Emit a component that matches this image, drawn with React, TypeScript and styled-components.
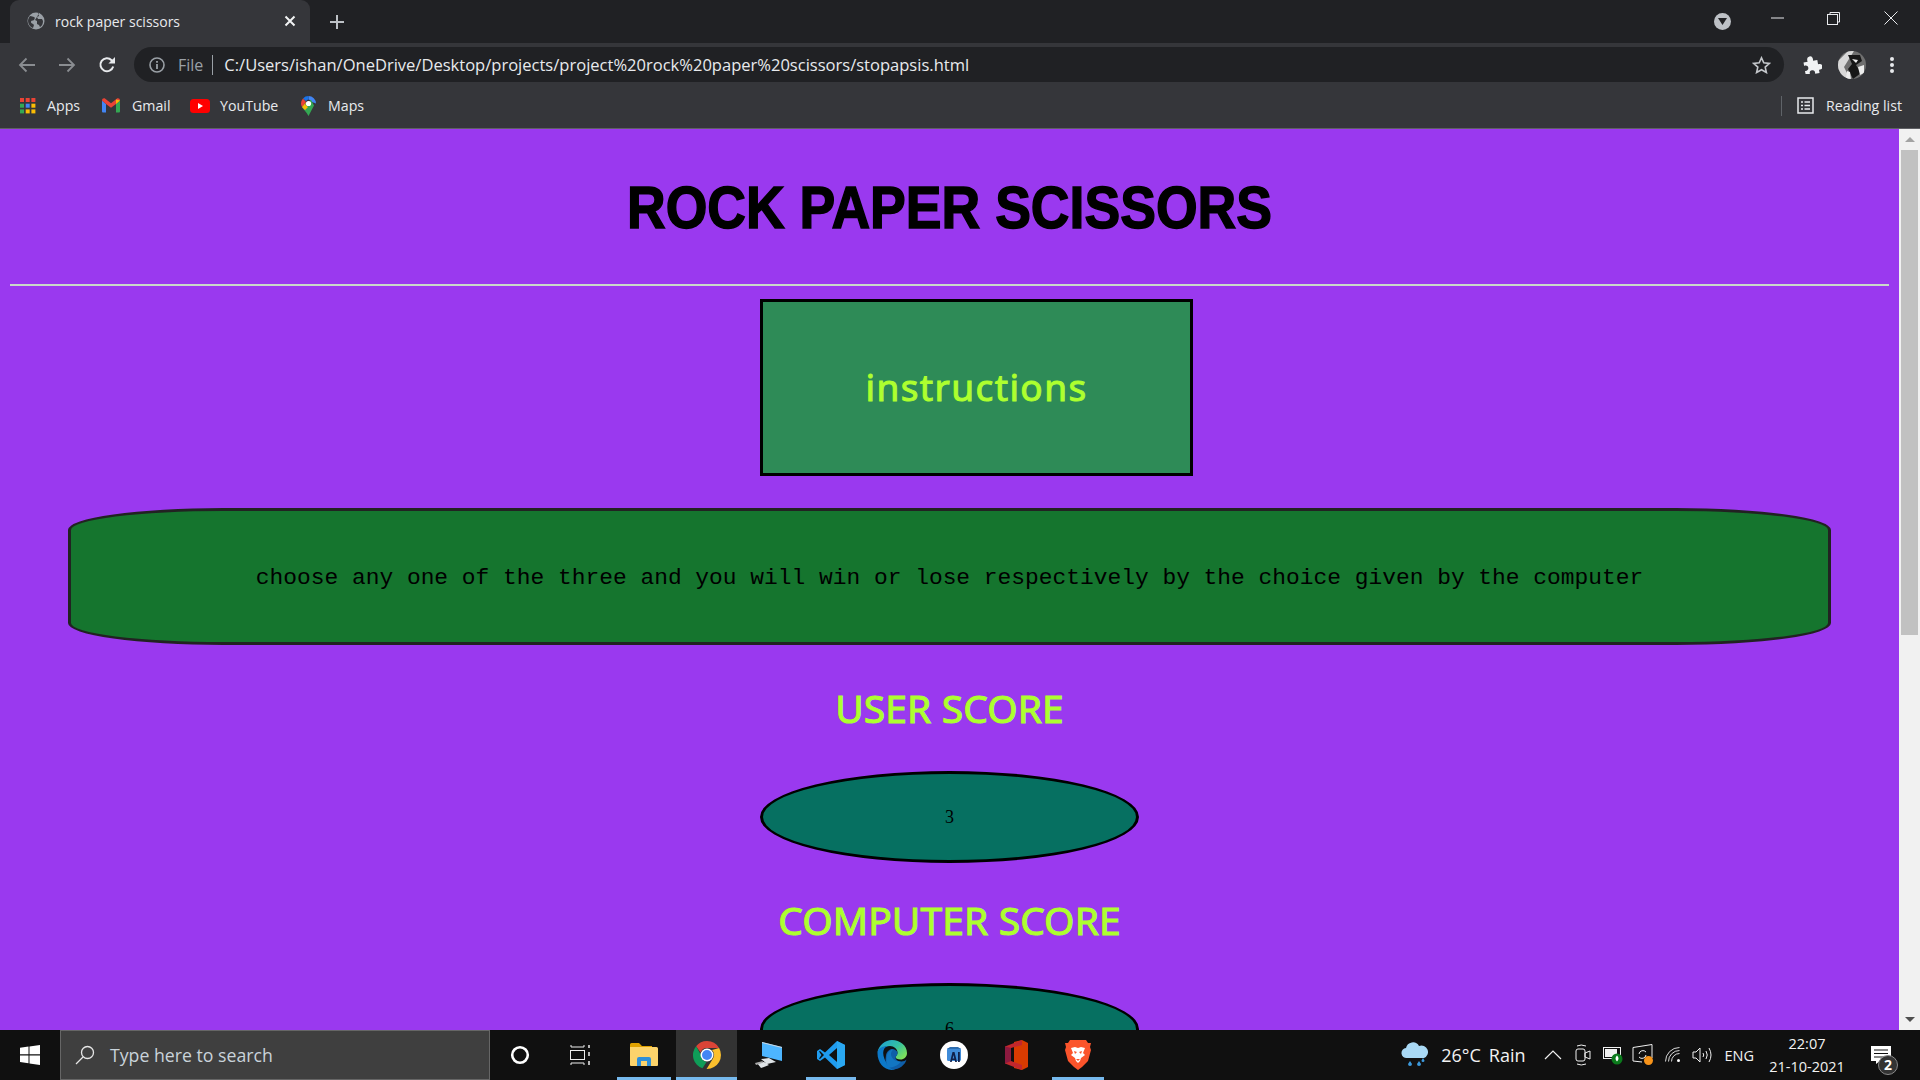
import React from "react";
import styled, { createGlobalStyle } from "styled-components";

const Global = createGlobalStyle`
  html, body { margin: 0; padding: 0; height: 100%; overflow: hidden; background: #101010; }
  #root { height: 100%; }
  * { box-sizing: border-box; }
`;

const uiFont = `"Open Sans", "Noto Sans", sans-serif`;

const Screen = styled.div`
  width: 1920px; height: 1080px; display: flex; flex-direction: column; overflow: hidden;
  font-family: ${uiFont};
`;

/* ---- browser chrome ---- */
const TabStrip = styled.div`
  height: 43px; background: #202124; display: flex; align-items: flex-end; padding-left: 10px; flex: none; color: #fff;
`;
const Tab = styled.div`
  width: 300px; height: 43px; background: #35363a; border-radius: 9px 9px 0 0; display: flex; align-items: center; padding: 0 14px 1px 17px;
`;
const TabTitle = styled.span`
  font-size: 14px; color: #e8eaed; margin-left: 10px; flex: 1; white-space: nowrap;
`;
const NewTab = styled.div`
  width: 54px; height: 43px; display: flex; align-items: center; justify-content: center;
`;
const StripSpacer = styled.div`flex: 1;`;
const WindowBtn = styled.div<{ $w: number }>`
  width: ${(p) => p.$w}px; height: 36px; align-self: flex-start; display: flex; align-items: center; justify-content: center;
`;
const ProfileChevron = styled.div`
  width: 17px; height: 17px; border-radius: 50%; background: #bdc1c6; margin-right: 19px; align-self: center; display: flex; align-items: center; justify-content: center;
`;
const Toolbar = styled.div`
  height: 43px; background: #35363a; display: flex; align-items: center; padding: 0 8px 0 7px; flex: none;
`;
const ToolBtn = styled.div`
  width: 40px; height: 40px; display: flex; align-items: center; justify-content: center; flex: none;
`;
const Omnibox = styled.div`
  flex: 1; height: 35px; margin: 0 8px 0 7px; background: #202124; border-radius: 18px; display: flex; align-items: center; padding: 0 13px 0 15px;
`;
const FileLabel = styled.span`
  font-size: 16px; color: #9aa0a6; margin-left: 13px;
`;
const Divider = styled.span`
  width: 1px; height: 20px; background: #9aa0a6; margin: 0 11px 0 9px;
`;
const UrlText = styled.span`
  font-size: 16.55px; color: #e8eaed; flex: 1; white-space: nowrap;
`;
const Avatar = styled.div`
  width: 28px; height: 28px; border-radius: 50%; overflow: hidden;
`;
const BookmarkBar = styled.div`
  height: 43px; background: #35363a; border-bottom: 1px solid #5f6064; display: flex; align-items: center; padding: 0 18px 3px 20px; flex: none;
`;
const Bookmark = styled.div<{ $w: number }>`
  width: ${(p) => p.$w}px; display: flex; align-items: center; height: 28px; flex: none;
`;
const BookmarkIcon = styled.span<{ $w: number }>`
  width: ${(p) => p.$w}px; display: flex; align-items: center; flex: none;
`;
const BookmarkText = styled.span`
  font-size: 14.2px; color: #e8eaed; white-space: nowrap;
`;
const BarSpacer = styled.div`flex: 1;`;
const ReadingDivider = styled.span`
  width: 1px; height: 20px; background: #5f6368; margin-right: 15px;
`;

/* ---- page ---- */
const Viewport = styled.div`
  flex: 1; min-height: 0; display: flex; background: #9a39ef;
`;
const PageContent = styled.main`
  flex: 1; min-width: 0; overflow: hidden; padding: 0 10px;
`;
const Heading = styled.h1`
  margin: 39px 0 0; height: 116px; text-align: center; color: #000; font: bold 60px/80px "Liberation Sans", Arial, sans-serif;
  transform: scaleX(0.893); -webkit-text-stroke: 1.5px #000;
`;
const Rule = styled.hr`
  margin: 0 0 13px; border: 0; height: 2px; background: #c9d9c9; width: 1879px;
`;
const InstructionsBox = styled.div`
  width: 433px; height: 177px; margin: 0 0 32px 750px; padding-bottom: 3px; background: #2e8b57; border: 3px solid #000; display: flex; align-items: center; justify-content: center;
  color: #adff2f; font: 400 37px "Noto Sans", sans-serif; letter-spacing: 1.4px; -webkit-text-stroke: 1px #adff2f;
`;
const Pill = styled.div`
  width: 1763px; height: 137px; margin-left: 58px; padding-top: 2px; background: #15752e; border: 3px solid #222; border-radius: 155px / 22px; display: flex; align-items: center; justify-content: center;
  font: 22.9px "Liberation Mono", monospace; color: #000; white-space: nowrap;
`;
const ScoreTitle = styled.h2`
  margin: 0; text-align: center; color: #adff2f; font: 400 39px/50px "Noto Sans", sans-serif; letter-spacing: 0.1px; -webkit-text-stroke: 1px #adff2f;
`;
const ScoreOval = styled.div`
  width: 379px; height: 92px; margin: 0 auto; background: #067061; border: 3px solid #000; border-radius: 50%;
  display: flex; align-items: center; justify-content: center; font: 18px "Liberation Serif", serif; color: #000;
`;
const ScoreBlock = styled.section<{ $top: number; $gap: number }>`
  padding-top: ${(p) => p.$top}px;
  ${ScoreTitle} { margin-bottom: ${(p) => p.$gap}px; }
`;
const ScrollBar = styled.div`
  width: 21px; background: #f1f1f1; display: flex; flex-direction: column; align-items: center; flex: none;
`;
const ScrollArrow = styled.div<{ $down?: boolean }>`
  height: 21px; width: 100%; display: flex; align-items: center; justify-content: center; flex: none;
  &::before {
    content: ""; width: 0; height: 0; border-left: 5px solid transparent; border-right: 5px solid transparent;
    ${(p) => (p.$down ? "border-top: 5px solid #505050;" : "border-bottom: 5px solid #a3a3a3;")}
  }
`;
const ScrollThumb = styled.div`
  width: 17px; height: 485px; background: #c1c1c1; flex: none;
`;
const ScrollGap = styled.div`flex: 1;`;

/* ---- taskbar ---- */
const Taskbar = styled.footer`
  height: 50px; background: #101010; display: flex; align-items: stretch; flex: none; color: #fff;
`;
const StartBtn = styled.div`
  width: 60px; display: flex; align-items: center; justify-content: center; flex: none;
`;
const SearchBox = styled.div`
  width: 430px; background: #3f3f3f; border: 1px solid #666; display: flex; align-items: center; padding-left: 14px; flex: none;
`;
const SearchText = styled.span`
  font-size: 17.7px; color: #c9d3da; margin-left: 15px; white-space: nowrap;
`;
const TaskSlot = styled.div<{ $w?: number; $active?: boolean; $running?: boolean; $ml?: number }>`
  position: relative; width: ${(p) => p.$w ?? 62}px; margin-left: ${(p) => p.$ml ?? 0}px; display: flex; align-items: center; justify-content: center; flex: none;
  background: ${(p) => (p.$active ? "#333" : "transparent")};
  ${(p) =>
    p.$running
      ? `&::after { content: ""; position: absolute; bottom: 0; height: 3px; background: #76b9ed; left: ${p.$active ? 0 : 5}px; right: ${p.$active ? 0 : 5}px; }`
      : ""}
`;
const Tray = styled.div`
  margin-left: auto; display: flex; align-items: center; padding-right: 14px;
`;
const TrayIcon = styled.div<{ $w: number; $ml?: number }>`
  width: ${(p) => p.$w}px; margin-left: ${(p) => p.$ml ?? 0}px; display: flex; align-items: center; justify-content: center; flex: none;
`;
const TrayText = styled.span<{ $ml?: number; $size?: number }>`
  font-size: ${(p) => p.$size ?? 18}px; margin-left: ${(p) => p.$ml ?? 0}px; color: #f2f2f2; white-space: nowrap;
`;
const Clock = styled.div`
  width: 86px; margin-left: 10px; text-align: center; font-size: 14.5px; line-height: 23px; color: #f2f2f2; white-space: nowrap;
`;
const Notify = styled.div`
  position: relative; width: 50px; margin-left: 6px; align-self: stretch; display: flex; align-items: center; justify-content: center;
`;
const NotifyBadge = styled.span`
  position: absolute; left: 22px; top: 25px; width: 20px; height: 20px; border-radius: 50%; background: #333; border: 1px solid #888; color: #fff;
  font: bold 14px/18px "Open Sans", sans-serif; text-align: center;
`;

/* ---- drawn icons ---- */
const Globe = () => (
  <svg width="18" height="18" viewBox="0 0 18 18">
    <circle cx="9" cy="9" r="8.5" fill="#9aa0a6" />
    <path d="M3 4c2 0 3 1 4 1s1 2 0 3-3 0-3 2 2 1 3 3l-1 3C3 15 1 12 1 9c0-2 1-4 2-5zM11 1l1 3-2 1 1 2 4 0 1 2c0 3-1 5-3 6l-1-2-2-1 0-3-2-1c2-3 3-5 4-7z" fill="#35363a" />
  </svg>
);
const CloseX = () => (
  <svg width="12" height="12" viewBox="0 0 12 12"><path d="M1.5 1.5l9 9M10.5 1.5l-9 9" stroke="#f1f3f4" strokeWidth="2" /></svg>
);
const Plus = () => (
  <svg width="16" height="16" viewBox="0 0 16 16"><path d="M8 1v14M1 8h14" stroke="#bdc1c6" strokeWidth="2" /></svg>
);
const Arrow = ({ right, color }: { right?: boolean; color: string }) => (
  <svg width="18" height="16" viewBox="0 0 18 16" style={right ? { transform: "scaleX(-1)" } : undefined}>
    <path d="M17 8H2M8.5 1.5L2 8l6.5 6.5" stroke={color} strokeWidth="1.8" fill="none" />
  </svg>
);
const Reload = () => (
  <svg width="18" height="18" viewBox="0 0 18 18">
    <path d="M15.2 10.5A6.5 6.5 0 1 1 13.6 4.2L15.5 6" stroke="#e8eaed" strokeWidth="2" fill="none" />
    <path d="M17 1v6.6h-6.6z" fill="#e8eaed" />
  </svg>
);
const Info = () => (
  <svg width="16" height="16" viewBox="0 0 16 16">
    <circle cx="8" cy="8" r="7" stroke="#9aa0a6" strokeWidth="1.6" fill="none" />
    <path d="M8 7v5M8 4v1.8" stroke="#9aa0a6" strokeWidth="1.8" />
  </svg>
);
const Star = () => (
  <svg width="19" height="18" viewBox="0 0 19 18">
    <path d="M9.5 1.8l2.3 5 5.5.6-4.1 3.7 1.2 5.4-4.9-2.8-4.9 2.8 1.2-5.4L1.7 7.4l5.5-.6z" stroke="#c4c7cb" strokeWidth="1.6" fill="none" />
  </svg>
);
const Puzzle = () => (
  <svg width="19" height="19" viewBox="0 0 19 19">
    <path d="M1 6h4.2C4.6 3.5 5.5 1 8 1s3.300 2.500 2.700 5H15v4.300c2.500-.6 4 .6 4 2.700s-1.500 3.300-4 2.700V19h-4.500c.6-2.500-.5-3.800-2.500-3.800S4.800 16.500 5.400 19H1v-4.500c2.300.6 3.800-.7 3.800-2.500S3.300 8.900 1 9.500z" fill="#f1f3f4" transform="rotate(-10 9.500 9.500)" />
  </svg>
);
const Dots = () => (
  <svg width="6" height="18" viewBox="0 0 6 18">
    <circle cx="3" cy="3" r="2" fill="#e8eaed" /><circle cx="3" cy="9" r="2" fill="#e8eaed" /><circle cx="3" cy="15" r="2" fill="#e8eaed" />
  </svg>
);
const AvatarArt = () => (
  <svg width="28" height="28" viewBox="0 0 28 28">
    <rect width="28" height="28" fill="#6f6f6f" />
    <path d="M0 10L10 0h6L6 16 12 28H2L0 24z" fill="#d8d8d8" />
    <path d="M10 4h12l2 6-6 4 5 8-8 6-5-10 4-5z" fill="#171717" />
    <path d="M14 8l6 1-2 3zM9 20l3 1 1 7H8zM20 16l6-2v8l-4 2z" fill="#ededed" />
  </svg>
);
const AppsGrid = () => {
  const colors = ["#ea4335", "#ea4335", "#ea4335", "#34a853", "#4285f4", "#fbbc04", "#34a853", "#fbbc04", "#fbbc04"];
  return (
    <svg width="16" height="16" viewBox="0 0 16 16">
      {colors.map((c, i) => (
        <rect key={i} x={(i % 3) * 5.7} y={Math.floor(i / 3) * 5.7} width="4" height="4" fill={c} />
      ))}
    </svg>
  );
};
const Gmail = () => (
  <svg width="18" height="15" viewBox="0 0 18 15">
    <path d="M0 2.500V13.500A1 1 0 0 0 1 14.500H4V6z" fill="#4285f4" />
    <path d="M14 6v8.500h3a1 1 0 0 0 1-1V2.500z" fill="#34a853" />
    <path d="M0 2.500C0 .5 2 -.2 3.300 .8L9 5.300 14.700 .8C16 -.2 18 .5 18 2.500L14 6 9 9.800 4 6z" fill="#ea4335" />
    <path d="M14 1.500L18 2.500 14 6z" fill="#fbbc04" />
  </svg>
);
const YouTube = () => (
  <svg width="20" height="14" viewBox="0 0 20 14">
    <rect width="20" height="14" rx="3.500" fill="#f00" /><path d="M8 4l5 3-5 3z" fill="#fff" />
  </svg>
);
const MapsPin = () => (
  <svg width="15" height="20" viewBox="0 0 15 20">
    <path d="M7.500 0A7.500 7.500 0 0 1 15 7.500L11 6A4 4 0 0 0 7.500 3.500z" fill="#4285f4" />
    <path d="M7.500 0A7.500 7.500 0 0 0 2 2.400L5 5.200A3.500 3.500 0 0 1 7.500 3.500z" fill="#1a73e8" />
    <path d="M2 2.400A7.500 7.500 0 0 0 0 7.500c0 1.200.4 2.300 1 3.400L5 6z" fill="#ea4335" />
    <path d="M1 10.900L10 3.800 13 9.500 7.500 20C5.500 16 2.500 13.500 1 10.900z" fill="#34a853" />
    <path d="M1 10.900L5 6.200 4.400 9 7 11 4 14z" fill="#fbbc04" />
    <circle cx="7.500" cy="7.500" r="2.600" fill="#fff" />
  </svg>
);
const ReadingList = () => (
  <svg width="17" height="17" viewBox="0 0 17 17">
    <rect x="1" y="1" width="15" height="15" fill="none" stroke="#e8eaed" strokeWidth="1.500" />
    <path d="M4 5h2M7.500 5h5.500M4 8.500h2M7.500 8.500h5.500M4 12h2M7.500 12h5.500" stroke="#e8eaed" strokeWidth="1.500" />
  </svg>
);
const Minimize = () => (
  <svg width="13" height="2" viewBox="0 0 13 2"><path d="M0 1h13" stroke="#e8eaed" /></svg>
);
const Restore = () => (
  <svg width="13" height="13" viewBox="0 0 13 13">
    <path d="M3 2.500V.5h9.500V10H10.500" stroke="#e8eaed" fill="none" /><rect x=".5" y="2.500" width="10" height="10" stroke="#e8eaed" fill="none" />
  </svg>
);
const WinClose = () => (
  <svg width="14" height="14" viewBox="0 0 14 14"><path d="M.5 .5l13 13M13.500 .5l-13 13" stroke="#e8eaed" /></svg>
);
const WindowsLogo = () => (
  <svg width="20" height="20" viewBox="0 0 20 20">
    <path d="M0 2.800L8.500 1.600V9.300H0zM9.500 1.400L20 0V9.300H9.500zM0 10.400H8.500V18.200L0 17zM9.500 10.400H20V20L9.500 18.500z" fill="#fff" />
  </svg>
);
const SearchGlass = () => (
  <svg width="20" height="20" viewBox="0 0 20 20">
    <circle cx="12.500" cy="7.500" r="6" fill="none" stroke="#e6e6e6" strokeWidth="1.300" /><path d="M8 12L1 19" stroke="#e6e6e6" strokeWidth="1.300" />
  </svg>
);
const Cortana = () => (
  <svg width="20" height="20" viewBox="0 0 20 20"><circle cx="10" cy="10" r="7.800" stroke="#fff" strokeWidth="2.600" fill="none" /></svg>
);
const TaskView = () => (
  <svg width="21" height="20" viewBox="0 0 21 20">
    <path d="M1 0v2h13V0M1 20v-2h13v2" stroke="#eee" fill="none" /><rect x=".5" y="5.500" width="14" height="9" stroke="#eee" fill="none" /><path d="M19 0v3M19 7v4M19 16v4" stroke="#eee" strokeWidth="1.500" />
  </svg>
);
const Folder = () => (
  <svg width="28" height="25" viewBox="0 0 28 25">
    <path d="M0 1.500A1.500 1.500 0 0 1 1.500 0H9l3 3h10v3H0z" fill="#e0a100" />
    <path d="M0 4h26.500A1.500 1.500 0 0 1 28 5.500V22a1 1 0 0 1-1 1H1a1 1 0 0 1-1-1z" fill="#fcd36b" />
    <path d="M7 23v-7a2 2 0 0 1 2-2h10a2 2 0 0 1 2 2v7h-4v-5h-6v5z" fill="#2f8fd8" />
  </svg>
);
const Chrome = () => (
  <svg width="28" height="28" viewBox="0 0 28 28">
    <path d="M14 0a14 14 0 0 1 12.100 7H14a7 7 0 0 0-6.500 4.400L3.100 5.200A14 14 0 0 1 14 0z" fill="#db4437" />
    <path d="M3.100 5.200L8 14a7 7 0 0 0 5.500 6.900L9.500 27.300A14 14 0 0 1 3.100 5.200z" fill="#0f9d58" />
    <path d="M26.100 7A14 14 0 0 1 14 28h-.4L20 17.500A7 7 0 0 0 19 9.100z" fill="#fbc02d" />
    <circle cx="14" cy="14" r="6.500" fill="#fff" /><circle cx="14" cy="14" r="5" fill="#4285f4" />
  </svg>
);
const ThisPc = () => (
  <svg width="28" height="26" viewBox="0 0 28 26">
    <path d="M7 0l20 5v14L7 14z" fill="#4db5ff" /><path d="M7 0l20 5v1L7 1z" fill="#cfd6dc" />
    <path d="M6 17l8-1 7 4-9 2zM2 21l7-1 5 3-8 3z" fill="#dfe3e6" /><path d="M0 21l8-2-1 2-6 2z" fill="#aaa" />
  </svg>
);
const VsCode = () => (
  <svg width="30" height="30" viewBox="0 0 30 30">
    <path d="M21 1l8 4v20l-8 4-12-11.500L4 21 1 19v-8l3-2 5 3.500z" fill="#1f9cf0" />
    <path d="M21 8l-8 7 8 7z" fill="#101010" /><path d="M3 11.500l1-.5 4 4-4 4-1-.5 2.500-3.500z" fill="#101010" />
    <path d="M21 1l8 4v20l-8 4z" fill="#2aa8f2" />
  </svg>
);
const Edge = () => (
  <svg width="30" height="30" viewBox="0 0 30 30">
    <path d="M15 0c8 0 15 5.500 15 13 0 4-3 6.500-6.500 6.500-3 0-5-1-5-2.500 0-1 2-1.500 2-4.500C20.500 9 17 6 13 6 6 6 1.500 10 .5 12 2 5 8 0 15 0z" fill="url(#eg)" />
    <path d="M.5 12C1.500 8 6 6 11 6c-5 1.500-6 7-3.500 13 1.500 4 6 8 10.500 10.500C8 32 0 23 .5 12z" fill="#0c78c8" />
    <path d="M9 15c1-4 4-6.500 7-6 3 .5 4.500 2.500 4.500 4 0 3-2 3-2 4.500 0 2.500 3 4 6 4 2 0 4-1 5-2-1 5-7 10-14 10-4-1.500-7-6-7-10z" fill="#0f5ea8" />
    <path d="M10 15.500c.5-3.500 3.500-6 6-5.500-1 .5-2 2-2 4 0 4 4 8 10 7.500-3 4-8 6-12 6-3-2-3-8-2-12z" fill="#1487d4" opacity=".6" />
    <defs>
      <linearGradient id="eg" x1="0" y1="0" x2="1" y2="0.700"><stop offset="0" stopColor="#1a9bd8" /><stop offset=".6" stopColor="#35c1a0" /><stop offset="1" stopColor="#7ce05c" /></linearGradient>
    </defs>
  </svg>
);
const AiApp = () => (
  <svg width="28" height="28" viewBox="0 0 28 28">
    <circle cx="14" cy="14" r="14" fill="#fff" />
    <rect x="7" y="7" width="14" height="13" rx="1.500" fill="#3f8bd8" />
    <path d="M7 8l3-2h8l3 2z" fill="#2d6db0" />
    <path d="M10 21l2.500-10h2L17 21h-1.800l-.5-2h-2.500l-.5 2zM12.600 17.500h1.700l-.8-3.600zM18 11h1.800v10H18z" fill="#10204a" />
  </svg>
);
const Office = () => (
  <svg width="24" height="30" viewBox="0 0 24 30">
    <path d="M10 2L18 0l6 3v24l-6 3-8-2z" fill="#d83b01" />
    <path d="M1 6.500L18 0v5l-11 3v13l11 4v5L1 23.500z" fill="#c1272d" />
    <path d="M1 6.500L7 8v13l-6 2.500z" fill="#8c1a3f" />
  </svg>
);
const Brave = () => (
  <svg width="26" height="30" viewBox="0 0 26 30">
    <path d="M5 0h16l2 3 3 0-1 4 1 3-3 11-6 6-4 3-4-3-6-6L0 10l1-3-1-4 3 0z" fill="#fb542b" />
    <path d="M6 8l4-1 3 1 3-1 4 1-2 5 2 2-4 3-1 3-2 2-2-2-1-3-4-3 2-2z" fill="#fff" />
    <path d="M9 11l3 1-2 2zM17 11l-3 1 2 2zM11 19h4l-2 2z" fill="#fb542b" />
  </svg>
);
const Cloud = () => (
  <svg width="28" height="28" viewBox="0 0 28 28">
    <path d="M6 17a5 5 0 0 1-1-10 7 7 0 0 1 13-2 6 6 0 0 1 5 12z" fill="#a9d9f5" />
    <path d="M9 20l2 3a2 2 0 0 1-4 0zM18 20l2 3a2 2 0 0 1-4 0zM22 17l1.500 2.500a1.500 1.500 0 0 1-3 0z" fill="#3c99dc" />
  </svg>
);
const ChevronUp = () => (
  <svg width="18" height="10" viewBox="0 0 18 10"><path d="M1 9l8-8 8 8" stroke="#f0f0f0" strokeWidth="1.200" fill="none" /></svg>
);
const Meet = () => (
  <svg width="16" height="22" viewBox="0 0 16 22">
    <rect x="1" y="5" width="9" height="12" rx="2" stroke="#f0f0f0" fill="none" /><path d="M10 9l5-2v8l-5-2zM2 2q4-2 9 0M2 20q4 2 9 0" stroke="#f0f0f0" fill="none" />
  </svg>
);
const Battery = () => (
  <svg width="20" height="20" viewBox="0 0 20 20">
    <rect x=".5" y="2.500" width="17" height="11" stroke="#f0f0f0" fill="none" /><rect x="2" y="4" width="12" height="8" fill="#f0f0f0" />
    <circle cx="14" cy="14" r="5.500" fill="#0b7a1c" /><path d="M14 10.500c2 2 2 4 0 6-2-2-2-4 0-6z" fill="#fff" />
  </svg>
);
const SyncScreen = () => (
  <svg width="22" height="22" viewBox="0 0 22 22">
    <path d="M1 3.500L20 .5V14M1 3.500V17l9 1" stroke="#f0f0f0" fill="none" /><path d="M7 10a4 4 0 0 1 7-2M14 11a4 4 0 0 1-7 2" stroke="#f0f0f0" fill="none" />
    <circle cx="16.500" cy="16.500" r="4.500" fill="#f7931a" />
  </svg>
);
const Wifi = () => (
  <svg width="16" height="16" viewBox="0 0 16 16">
    <path d="M.5 14.500A14 14 0 0 1 14.500 .5M3.500 14.500A11 11 0 0 1 14.500 3.500M6.500 14.500A8 8 0 0 1 14.500 6.500" stroke="#f0f0f0" fill="none" opacity=".9" /><circle cx="13.500" cy="13.500" r="1.500" fill="#fff" />
  </svg>
);
const Volume = () => (
  <svg width="21" height="18" viewBox="0 0 21 18">
    <path d="M1 6h3l4-4v14l-4-4H1z" stroke="#f0f0f0" fill="none" /><path d="M11 7q1.500 2 0 4M14 5q2.500 4 0 8M17 2q4 7 0 14" stroke="#f0f0f0" fill="none" />
  </svg>
);
const NotifyIcon = () => (
  <svg width="20" height="18" viewBox="0 0 20 18">
    <path d="M0 0h20v15H9l-4 3v-3H0z" fill="#fff" /><path d="M3 4h14M3 7.500h14M3 11h10" stroke="#101010" strokeWidth="1.200" />
  </svg>
);

export default function App() {
  return (
    <Screen>
      <Global />
      <TabStrip>
        <Tab>
          <Globe />
          <TabTitle>rock paper scissors</TabTitle>
          <CloseX />
        </Tab>
        <NewTab><Plus /></NewTab>
        <StripSpacer />
        <ProfileChevron>
          <svg width="9" height="7" viewBox="0 0 9 7"><path d="M0 0h9L4.500 7z" fill="#202124" /></svg>
        </ProfileChevron>
        <WindowBtn $w={54}><Minimize /></WindowBtn>
        <WindowBtn $w={58}><Restore /></WindowBtn>
        <WindowBtn $w={58}><WinClose /></WindowBtn>
      </TabStrip>
      <Toolbar>
        <ToolBtn><Arrow color="#8a8d91" /></ToolBtn>
        <ToolBtn><Arrow right color="#8a8d91" /></ToolBtn>
        <ToolBtn><Reload /></ToolBtn>
        <Omnibox>
          <Info />
          <FileLabel>File</FileLabel>
          <Divider />
          <UrlText>C:/Users/ishan/OneDrive/Desktop/projects/project%20rock%20paper%20scissors/stopapsis.html</UrlText>
          <Star />
        </Omnibox>
        <ToolBtn><Puzzle /></ToolBtn>
        <ToolBtn><Avatar><AvatarArt /></Avatar></ToolBtn>
        <ToolBtn><Dots /></ToolBtn>
      </Toolbar>
      <BookmarkBar>
        <Bookmark $w={82}><BookmarkIcon $w={27}><AppsGrid /></BookmarkIcon><BookmarkText>Apps</BookmarkText></Bookmark>
        <Bookmark $w={88}><BookmarkIcon $w={30}><Gmail /></BookmarkIcon><BookmarkText>Gmail</BookmarkText></Bookmark>
        <Bookmark $w={111}><BookmarkIcon $w={30}><YouTube /></BookmarkIcon><BookmarkText>YouTube</BookmarkText></Bookmark>
        <Bookmark $w={90}><BookmarkIcon $w={27}><MapsPin /></BookmarkIcon><BookmarkText>Maps</BookmarkText></Bookmark>
        <BarSpacer />
        <ReadingDivider />
        <BookmarkIcon $w={29}><ReadingList /></BookmarkIcon>
        <BookmarkText>Reading list</BookmarkText>
      </BookmarkBar>
      <Viewport>
        <PageContent>
          <Heading>ROCK PAPER SCISSORS</Heading>
          <Rule />
          <InstructionsBox>instructions</InstructionsBox>
          <Pill>choose any one of the three and you will win or lose respectively by the choice given by the computer</Pill>
          <ScoreBlock $top={38} $gap={38}>
            <ScoreTitle>USER SCORE</ScoreTitle>
            <ScoreOval>3</ScoreOval>
          </ScoreBlock>
          <ScoreBlock $top={32} $gap={38}>
            <ScoreTitle>COMPUTER SCORE</ScoreTitle>
            <ScoreOval>6</ScoreOval>
          </ScoreBlock>
        </PageContent>
        <ScrollBar>
          <ScrollArrow />
          <ScrollThumb />
          <ScrollGap />
          <ScrollArrow $down />
        </ScrollBar>
      </Viewport>
      <Taskbar>
        <StartBtn><WindowsLogo /></StartBtn>
        <SearchBox>
          <SearchGlass />
          <SearchText>Type here to search</SearchText>
        </SearchBox>
        <TaskSlot $w={60}><Cortana /></TaskSlot>
        <TaskSlot $w={60}><TaskView /></TaskSlot>
        <TaskSlot $w={64} $ml={2} $running><Folder /></TaskSlot>
        <TaskSlot $w={61} $active $running><Chrome /></TaskSlot>
        <TaskSlot $w={64}><ThisPc /></TaskSlot>
        <TaskSlot $w={60} $running><VsCode /></TaskSlot>
        <TaskSlot><Edge /></TaskSlot>
        <TaskSlot><AiApp /></TaskSlot>
        <TaskSlot><Office /></TaskSlot>
        <TaskSlot $running><Brave /></TaskSlot>
        <Tray>
          <TrayIcon $w={30}><Cloud /></TrayIcon>
          <TrayText $ml={11}>26°C</TrayText>
          <TrayText $ml={8}>Rain</TrayText>
          <TrayIcon $w={30} $ml={13}><ChevronUp /></TrayIcon>
          <TrayIcon $w={30}><Meet /></TrayIcon>
          <TrayIcon $w={30}><Battery /></TrayIcon>
          <TrayIcon $w={30}><SyncScreen /></TrayIcon>
          <TrayIcon $w={30}><Wifi /></TrayIcon>
          <TrayIcon $w={28}><Volume /></TrayIcon>
          <TrayText $ml={8} $size={14.5}>ENG</TrayText>
          <Clock>22:07<br />21-10-2021</Clock>
          <Notify><NotifyIcon /><NotifyBadge>2</NotifyBadge></Notify>
        </Tray>
      </Taskbar>
    </Screen>
  );
}
